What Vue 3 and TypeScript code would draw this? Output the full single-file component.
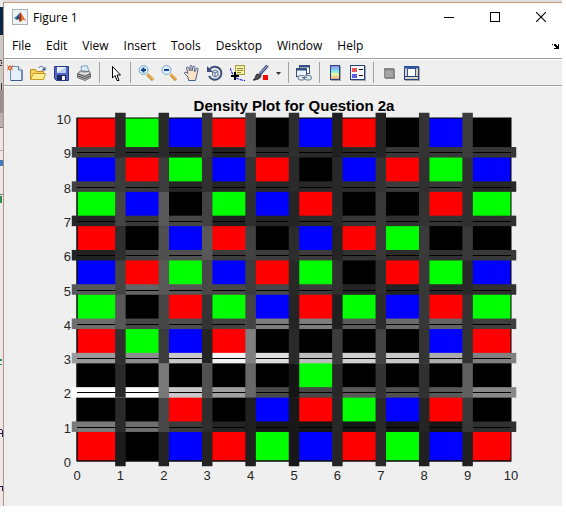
<script setup lang="ts">
const menus: string[] = ['File', 'Edit', 'View', 'Insert', 'Tools', 'Desktop', 'Window', 'Help']

// Axes frame inside the figure canvas
const left = 73
const top = 31
const width = 434
const height = 343
const n = 10
const stepX = width / n
const stepY = height / n
const line = 10.5
const cap = line / 2

const fills: Record<string, string> = { R: '#ff0000', G: '#00ff00', B: '#0000ff', K: '#000000' }

// Node types, top row first
const rows: string[] = [
  'RGBRKBRKBK',
  'BRGBRKBRGB',
  'GBKGBRKKRG',
  'RKBRKBRGKK',
  'BRGBRGKRGB',
  'GKRGBRGBRG',
  'RGBRKKKKBR',
  'KKKKKGKKKK',
  'KKRKBRGBRK',
  'RKBRGBRGBR',
]

// Grey levels of the horizontal edges, from y = 9 down to y = 1
const across: string[] = [
  '3c 2a 22 24 2a 2a 28 38 38 36',
  '40 3a 26 26 28 28 2c 3c 38 28',
  '26 38 46 20 26 2c 36 30 33 30',
  '22 42 50 3c 3c 3c 33 2c 30 38',
  '58 64 56 48 48 3c 24 22 28 30',
  '6e 48 4e 44 7c 7c 5a 6c 64 40',
  '9a 8c c8 f4 de bc d0 c8 ac 80',
  'ff ff c8 a0 4a 48 58 50 58 88',
  '7a 6e 3c 24 18 16 16 16 16 30',
]

// Grey levels of the vertical edges, x = 1 to x = 9, from the top down
const down: string[] = [
  '2a 3c 44 2e 44 58 30 2a 2a 1c',
  '2a 3c 58 50 58 46 3c 78 48 24',
  '38 30 42 58 48 34 24 50 2e 24',
  '44 33 2e 42 3c 44 80 68 20 20',
  '2e 2a 24 2c 28 24 2a 14 18 18',
  '20 28 28 24 30 20 3c 28 28 26',
  '24 34 38 38 30 2c 44 34 2a 2a',
  '34 30 33 3a 38 38 34 30 24 20',
  '3c 30 30 38 28 33 33 60 38 20',
]

interface Box { x: number; y: number; w: number; h: number; fill: string }

const cells: Box[] = rows.flatMap((row, r) =>
  row.split('').map((k, c) => ({ x: left + c * stepX, y: top + r * stepY, w: stepX, h: stepY, fill: fills[k] })),
)

const horizontals: Box[] = across.flatMap((levels, r) =>
  levels.split(' ').map((g, c) => ({
    x: left + c * stepX - cap,
    y: top + (r + 1) * stepY - cap,
    w: stepX + line,
    h: line,
    fill: `#${g}${g}${g}`,
  })),
)

const verticals: Box[] = down.flatMap((levels, c) =>
  levels.split(' ').map((g, r) => ({
    x: left + (c + 1) * stepX - cap,
    y: top + r * stepY + (r === 0 ? -cap : cap),
    w: line,
    h: stepY + (r === 0 ? line : 0),
    fill: `#${g}${g}${g}`,
  })),
)

const ticks: number[] = Array.from({ length: n + 1 }, (_, i) => i)
</script>

<template>
  <div class="desktop">
    <svg class="behind" viewBox="0 0 3 506" aria-hidden="true">
      <rect width="3" height="506" fill="#e9e9e9" />
      <rect y="7" width="3" height="28" fill="#06294a" />
      <rect y="35" width="3" height="55" fill="#c9c9c9" />
      <rect y="90" width="3" height="23" fill="#929292" />
      <rect y="113" width="3" height="15" fill="#b2b2b2" />
      <rect y="127" width="3" height="1" fill="#777" />
      <rect y="150" width="3" height="1" fill="#aaa" />
      <rect y="160" width="3" height="6" fill="#3e7cc4" />
      <rect y="194" width="3" height="1" fill="#777" />
      <path d="M0 60h2v1h-2zM1 62h1v2h-1zM0 65h2v1h-2zM1 83h1v7h-1z" fill="#333" />
      <path d="M0 196h2v7h-2zM0 359h2v2h-2zM0 364h2v1h-2z" fill="#2b8f52" />
      <path d="M0 429h2v1h-2zM2 430h1v7h-1zM0 433h2v1h-2zM0 486h2v1h-2zM2 486h1v5h-1z" fill="#20204a" />
    </svg>

    <main class="window">
      <header class="titlebar">
        <svg class="logo" viewBox="0 0 16 16" aria-hidden="true">
          <rect x=".5" y=".5" width="15" height="15" fill="#edf2f5" stroke="#a9b2b8" />
          <path d="M2 9l3-2 1.500 1.500L4.500 11z" fill="#3f7fa8" />
          <path d="M5 7l3-3.500L7 10l-2.500 1z" fill="#234b75" />
          <path d="M8.500 3l2 3.500L14 12l-2.500-1.500L8 13l-1-2.500z" fill="#d95319" />
          <path d="M8.500 3l.5 6-1 4-1-2.500z" fill="#7d2410" />
          <path d="M10 6l1 4-1.500 1z" fill="#f5a43a" />
        </svg>
        <h1>Figure 1</h1>
        <div class="controls">
          <button type="button" aria-label="Minimize">
            <svg viewBox="0 0 10 10"><path d="M0 5.500h10" stroke="#000" /></svg>
          </button>
          <button type="button" aria-label="Maximize">
            <svg viewBox="0 0 10 10"><rect x=".5" y=".5" width="9" height="9" fill="none" stroke="#000" /></svg>
          </button>
          <button type="button" aria-label="Close">
            <svg viewBox="0 0 10 10"><path d="M0 0l10 10M10 0L0 10" stroke="#000" stroke-width="1.100" /></svg>
          </button>
        </div>
      </header>

      <nav class="menubar">
        <button v-for="m in menus" :key="m" type="button">{{ m }}</button>
        <button type="button" class="dock" aria-label="Dock figure">
          <svg viewBox="0 0 8 6"><path d="M0 1h2v1h1V1h2v1h1v1h1V1h1v5H3V5h2V4H4V3H3V2H1V1z" fill="#000" /></svg>
        </button>
      </nav>

      <div class="toolbar" role="toolbar">
        <button type="button" aria-label="New Figure">
          <svg viewBox="0 0 16 16">
            <path d="M3.500 1.500h8l3.500 3.500v10.500H3.500z" fill="#e4f1fb" stroke="#6d8fbd" />
            <path d="M15 5v10.500H4" fill="none" stroke="#39588c" />
            <path d="M11.500 1.500V5H15" fill="#fff" stroke="#55759f" />
            <path d="M0 0l6 5.500M6 0L0 5.500M3 0v6M0 3h6" stroke="#e6825b" />
            <circle cx="3" cy="3" r="1.500" fill="#ffd58b" stroke="#c9502c" />
          </svg>
        </button>
        <button type="button" aria-label="Open File">
          <svg viewBox="0 0 16 16">
            <path d="M.5 14.500v-10h5l1 2h7v8z" fill="#f5d15a" stroke="#b98d1c" />
            <path d="M.5 14.500L3.500 8.500h12l-2 6z" fill="#ffeb91" stroke="#c99b1f" />
            <path d="M8.500 3c2-2.500 4-2 5.500.5" fill="none" stroke="#4e6e9b" />
            <path d="M15.500 1.500v4h-4z" fill="#355a8d" />
          </svg>
        </button>
        <button type="button" aria-label="Save Figure">
          <svg viewBox="0 0 16 16">
            <path d="M1.500 1.500h14v14h-12l-2-2z" fill="#5064c4" stroke="#283a8a" />
            <rect x="4" y="2" width="9" height="6" fill="#eaf0fb" />
            <path d="M4 8L13 2v6z" fill="#b6c9ee" />
            <rect x="4" y="10" width="9" height="5" fill="#1d275d" />
            <rect x="9" y="11" width="3" height="4" fill="#f3f3ff" />
          </svg>
        </button>
        <button type="button" aria-label="Print Figure">
          <svg viewBox="0 0 16 16">
            <path d="M5 1.500l6-1 2 6-7 1z" fill="#d9efff" stroke="#7c9bb8" />
            <path d="M1.500 8.500l3-2.500 9 .5 1 3v3L9 15.500l-7.500-3z" fill="#bdbdbd" stroke="#6b6b6b" />
            <path d="M2 9l7 2.500L14.500 9M2 11l7 2.500 5-2.500" fill="none" stroke="#4c4c4c" />
            <path d="M4 8l6 1 3-2" fill="none" stroke="#eee" />
          </svg>
        </button>
        <span class="sep"></span>
        <button type="button" aria-label="Edit Plot">
          <svg viewBox="0 0 16 16"><path d="M5.500 1.500v11.500l2.500-2.500 2 5h2L10 10h3.500z" fill="#fff" stroke="#000" /></svg>
        </button>
        <span class="sep"></span>
        <button type="button" aria-label="Zoom In">
          <svg viewBox="0 0 16 16">
            <path d="M9.500 9.500L15 15" stroke="#a9812f" stroke-width="3" />
            <path d="M9.500 9L15 14.500" stroke="#f3ad42" stroke-width="2" />
            <circle cx="5.500" cy="5" r="4.500" fill="#d9f1fb" stroke="#7ea7c5" />
            <path d="M3 5h5M5.500 2.500v5" stroke="#173e92" stroke-width="2" />
          </svg>
        </button>
        <button type="button" aria-label="Zoom Out">
          <svg viewBox="0 0 16 16">
            <path d="M9.500 9.500L15 15" stroke="#a9812f" stroke-width="3" />
            <path d="M9.500 9L15 14.500" stroke="#f3ad42" stroke-width="2" />
            <circle cx="5.500" cy="5" r="4.500" fill="#d9f1fb" stroke="#7ea7c5" />
            <path d="M3 5h5" stroke="#173e92" stroke-width="2" />
          </svg>
        </button>
        <button type="button" aria-label="Pan">
          <svg viewBox="0 0 16 16">
            <path d="M4.500 15.500L4 12 .5 8.500C0 7 2 6.500 4 8.500L2.500 3c0-1.500 1.500-1.500 2 0L6 6V1.500C6 0 8 0 8 1.500V6l1-4c.5-1.500 2-1 2 .5L10.500 7l2-3.500c1-1 2 0 1.500 1L12.500 11l-1 4.500z" fill="#ffe1c4" stroke="#49618f" />
          </svg>
        </button>
        <button type="button" aria-label="Rotate 3D">
          <svg viewBox="0 0 16 16">
            <path d="M2.500 4.500A6.500 6.500 0 1 1 2 11" fill="none" stroke="#3a4f7c" stroke-width="2" />
            <path d="M0 1v6h6z" fill="#3a4f7c" />
            <path d="M5.500 6.500L8 5l3 1.500v4L8 12l-2.500-1.500zM5.500 6.500L8 8l3-1.500M8 8v4" fill="#e5eaf1" stroke="#5a6d92" />
          </svg>
        </button>
        <button type="button" aria-label="Data Cursor">
          <svg viewBox="0 0 16 16">
            <path d="M0 3l3 7c3 4 7 5 12 5.500" fill="none" stroke="#0000e6" stroke-dasharray="3 1" />
            <rect x="5.500" y=".5" width="9" height="9" fill="#fbf5a8" stroke="#a39a3a" />
            <path d="M7 3.500h6M7 5.500h6M7 7.500h4" stroke="#8c8538" />
            <path d="M1 11h8M5 7v8" stroke="#000" stroke-width="2" />
          </svg>
        </button>
        <button type="button" aria-label="Brush">
          <svg viewBox="0 0 16 16">
            <path d="M7 9L14.500.5" stroke="#38487d" stroke-width="3" />
            <path d="M7.500 8L14.500.5" stroke="#c5cdf2" />
            <path d="M0 15c3-1 2-4 4-6l4 1c0 3-3 5-8 5z" fill="#4d5059" stroke="#25272d" />
            <rect x="10" y="10" width="5" height="5" fill="#f00" />
          </svg>
        </button>
        <button type="button" class="caret" aria-label="Brush options">
          <svg viewBox="0 0 5 16"><path d="M0 7h5L2.500 10z" fill="#333" /></svg>
        </button>
        <span class="sep"></span>
        <button type="button" aria-label="Link Plot">
          <svg viewBox="0 0 16 16">
            <rect x="3.500" y=".5" width="10" height="8" fill="#fff" stroke="#324e82" />
            <path d="M3 1.500h11" stroke="#324e82" stroke-width="2" />
            <rect x=".5" y="3.500" width="10" height="8" fill="#eef4fb" stroke="#324e82" />
            <path d="M0 4.500h11" stroke="#324e82" stroke-width="2" />
            <rect x="2" y="10.500" width="7" height="4.500" rx="2.200" fill="#dce8ee" stroke="#617b8c" />
            <rect x="8" y="10.500" width="7.500" height="4.500" rx="2.200" fill="#dce8ee" stroke="#617b8c" />
            <path d="M6 12.700h5" stroke="#4f6778" />
          </svg>
        </button>
        <span class="sep"></span>
        <button type="button" aria-label="Insert Colorbar">
          <svg viewBox="0 0 16 16">
            <defs>
              <linearGradient id="spectrum" x2="0" y2="1">
                <stop offset="0" stop-color="#9a80ea" />
                <stop offset=".35" stop-color="#7ae0ef" />
                <stop offset=".65" stop-color="#e9f7a1" />
                <stop offset="1" stop-color="#f59b77" />
              </linearGradient>
            </defs>
            <rect x="4" y="1" width="10" height="15" fill="#a7a7a7" />
            <rect x="3.500" y=".5" width="9" height="14" fill="url(#spectrum)" stroke="#25427d" />
          </svg>
        </button>
        <button type="button" aria-label="Insert Legend">
          <svg viewBox="0 0 16 16">
            <rect x="1" y="1" width="15" height="15" fill="#a7a7a7" />
            <rect x=".5" y=".5" width="14" height="14" fill="#f7f8ff" stroke="#25427d" />
            <rect x="2" y="3" width="5" height="4" fill="#e95b5b" />
            <rect x="2" y="9" width="5" height="4" fill="#5c5ce8" />
            <path d="M9 4.500h4M9 10.500h4" stroke="#111" />
          </svg>
        </button>
        <span class="sep"></span>
        <button type="button" aria-label="Hide Plot Tools">
          <svg viewBox="0 0 16 16">
            <rect x="4" y="4" width="10" height="10" fill="#888" />
            <rect x="3.500" y="3.500" width="9" height="9" fill="#a3a3a3" stroke="#858585" />
            <path d="M3 4.500h10" stroke="#858585" stroke-width="2" />
          </svg>
        </button>
        <button type="button" aria-label="Show Plot Tools and Dock Figure">
          <svg viewBox="0 0 16 16">
            <rect x="1" y="2" width="15" height="14" fill="#a7a7a7" />
            <rect x=".5" y="1.500" width="14" height="13" fill="#d7d4c0" stroke="#25427d" />
            <path d="M0 2.500h15" stroke="#3659a9" stroke-width="2" />
            <rect x="3.500" y="3.500" width="8" height="8" fill="#fff" stroke="#3a55a0" />
            <path d="M1 11.500h13" stroke="#25427d" />
          </svg>
        </button>
      </div>

      <section class="canvas">
        <svg viewBox="0 0 558 419" role="img" aria-labelledby="plot-title">
          <text id="plot-title" class="title" :x="left + width / 2" y="24">Density Plot for Question 2a</text>

          <rect
            v-for="(b, i) in cells" :key="'c' + i"
            :x="b.x" :y="b.y" :width="b.w" :height="b.h" :fill="b.fill" stroke="#000"
          />
          <path :d="`M${left} ${top}V${top + height}H${left + width}`" fill="none" stroke="#111" />

          <rect
            v-for="(b, i) in horizontals" :key="'h' + i"
            :x="b.x" :y="b.y" :width="b.w" :height="b.h" :fill="b.fill"
          />
          <rect
            v-for="i in n - 1" :key="'l' + i" class="crisp"
            :x="left" :y="Math.round(top + i * stepY)" :width="width" height="1" fill="#000"
          />
          <rect
            v-for="(b, i) in verticals" :key="'v' + i"
            :x="b.x" :y="b.y" :width="b.w" :height="b.h" :fill="b.fill"
          />

          <text
            v-for="t in ticks" :key="'x' + t" class="tick x"
            :x="left + t * stepX" :y="top + height + 19"
          >{{ t }}</text>
          <text
            v-for="t in ticks" :key="'y' + t" class="tick y"
            :x="left - 6" :y="top + height - t * stepY + 6"
          >{{ t }}</text>
        </svg>
      </section>
    </main>
  </div>
</template>

<style>
body {
  margin: 0;
  background: #fff;
}
</style>

<style scoped>
.desktop {
  display: flex;
  margin: 0 4px 10px 0;
  padding-top: 2px;
  background: #dfdfdf;
}

.behind {
  display: block;
  flex: none;
  width: 3px;
  height: 506px;
  margin-top: -2px;
}

.window {
  flex: 1;
  min-width: 0;
  border-top: 1px solid #c9997f;
  border-left: 1px solid #b88f80;
  background: #efefef;
  color: #000;
  font-family: "Open Sans", "Noto Sans", sans-serif;
  font-size: 12px;
}

button {
  margin: 0;
  padding: 0;
  border: 0;
  background: none;
  color: inherit;
  font: inherit;
}

svg {
  display: block;
}

.titlebar {
  display: flex;
  align-items: center;
  gap: 5px;
  height: 28px;
  padding-left: 8px;
  background: #fff;
}

.logo {
  width: 16px;
  height: 16px;
}

h1 {
  margin: 0;
  font-size: 12px;
  font-weight: 400;
}

.controls {
  display: flex;
  gap: 4px;
  margin-left: auto;
}

.controls button {
  display: grid;
  place-items: center;
  width: 42px;
  height: 28px;
}

.controls svg {
  width: 10px;
  height: 10px;
}

.menubar {
  display: flex;
  align-items: center;
  gap: 15px;
  height: 25px;
  padding: 2px 3px 0 8px;
  border-bottom: 1px solid #a0a0a0;
  background: #fff;
}

.dock {
  margin-left: auto;
}

.dock svg {
  width: 8px;
  height: 6px;
}

.toolbar {
  display: flex;
  align-items: center;
  gap: 7px;
  height: 25px;
  padding-left: 3px;
  border-top: 1px solid #fff;
  border-bottom: 1px solid #a0a0a0;
}

.toolbar button,
.toolbar svg {
  width: 16px;
  height: 16px;
}

.toolbar .caret,
.caret svg {
  width: 5px;
}

.sep {
  width: 1px;
  height: 21px;
  background: #a0a0a0;
}

.canvas {
  border-top: 1px solid #fff;
}

.canvas svg {
  width: 100%;
  height: auto;
}

.canvas text {
  font-family: "Liberation Sans", Arial, sans-serif;
}

.title {
  fill: #000;
  font-size: 15px;
  font-weight: 700;
  text-anchor: middle;
}

.tick {
  fill: #262626;
  font-size: 13px;
}

.x {
  text-anchor: middle;
}

.y {
  text-anchor: end;
}

.crisp {
  shape-rendering: crispEdges;
}
</style>
